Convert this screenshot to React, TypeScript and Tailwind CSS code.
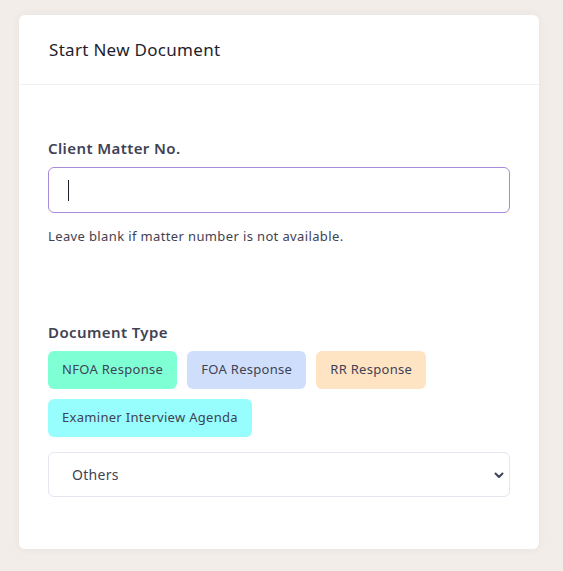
import React from "react";

const types = [
  { label: "NFOA Response", bg: "bg-[#7fffd4]" },
  { label: "FOA Response", bg: "bg-[#cfdffb]" },
  { label: "RR Response", bg: "bg-[#ffe4c4]" },
  { label: "Examiner Interview Agenda", bg: "bg-[#97fdfd]" },
];

export default function App() {
  return (
    <div className="min-h-[571px] bg-[#f2ede8] pt-[15px] pb-[22px] pl-[19px] font-['Noto_Sans',sans-serif]">
      <div className="w-[520px] rounded-md bg-white shadow-[0_0_10px_rgba(82,63,105,0.06)]">
        <div className="flex h-[70px] items-center border-b border-[#eff2f5] px-[30px]">
          <h3 className="text-[17px] font-normal tracking-[0.3px] text-[#1e1e2d]">Start New Document</h3>
        </div>

        <div className="px-[29px] pt-[52px] pb-[52px]">
          <label className="block text-[15px] font-semibold leading-[22px] tracking-[0.4px] text-[#3f4254]">
            Client Matter No.
          </label>
          <div className="mt-[8px] flex h-[46px] items-center rounded-md border border-[#a68bdb] px-[19px]">
            <div className="h-[21px] w-px bg-[#1e1e2d]" />
          </div>
          <p className="mt-[13px] text-[13px] leading-[20px] tracking-[0.37px] text-[#3f4254]">
            Leave blank if matter number is not available.
          </p>

          <label className="mt-[75px] block text-[15px] font-semibold leading-[22px] tracking-[0.4px] text-[#3f4254]">
            Document Type
          </label>
          <div className="mt-[8px] flex flex-wrap gap-[10px]">
            {types.map((t) => (
              <button
                key={t.label}
                className={`h-[38px] rounded-md px-[14px] text-[13px] tracking-[0.3px] text-[#3f4254] ${t.bg}`}
              >
                {t.label}
              </button>
            ))}
          </div>
          <div className="relative mt-[15px] flex h-[45px] items-center rounded-md border border-[#e4e6ef] px-[23px]">
            <span className="text-[14px] tracking-[0.3px] text-[#3f4254]">Others</span>
            <svg
              className="absolute right-[4px] top-1/2 -translate-y-1/2"
              width="12"
              height="12"
              viewBox="0 0 12 12"
              fill="none"
            >
              <path d="M2.5 4.5 6 8l3.5-3.5" stroke="#3f4254" strokeWidth="2" strokeLinecap="round" strokeLinejoin="round" />
            </svg>
          </div>
        </div>
      </div>
    </div>
  );
}
